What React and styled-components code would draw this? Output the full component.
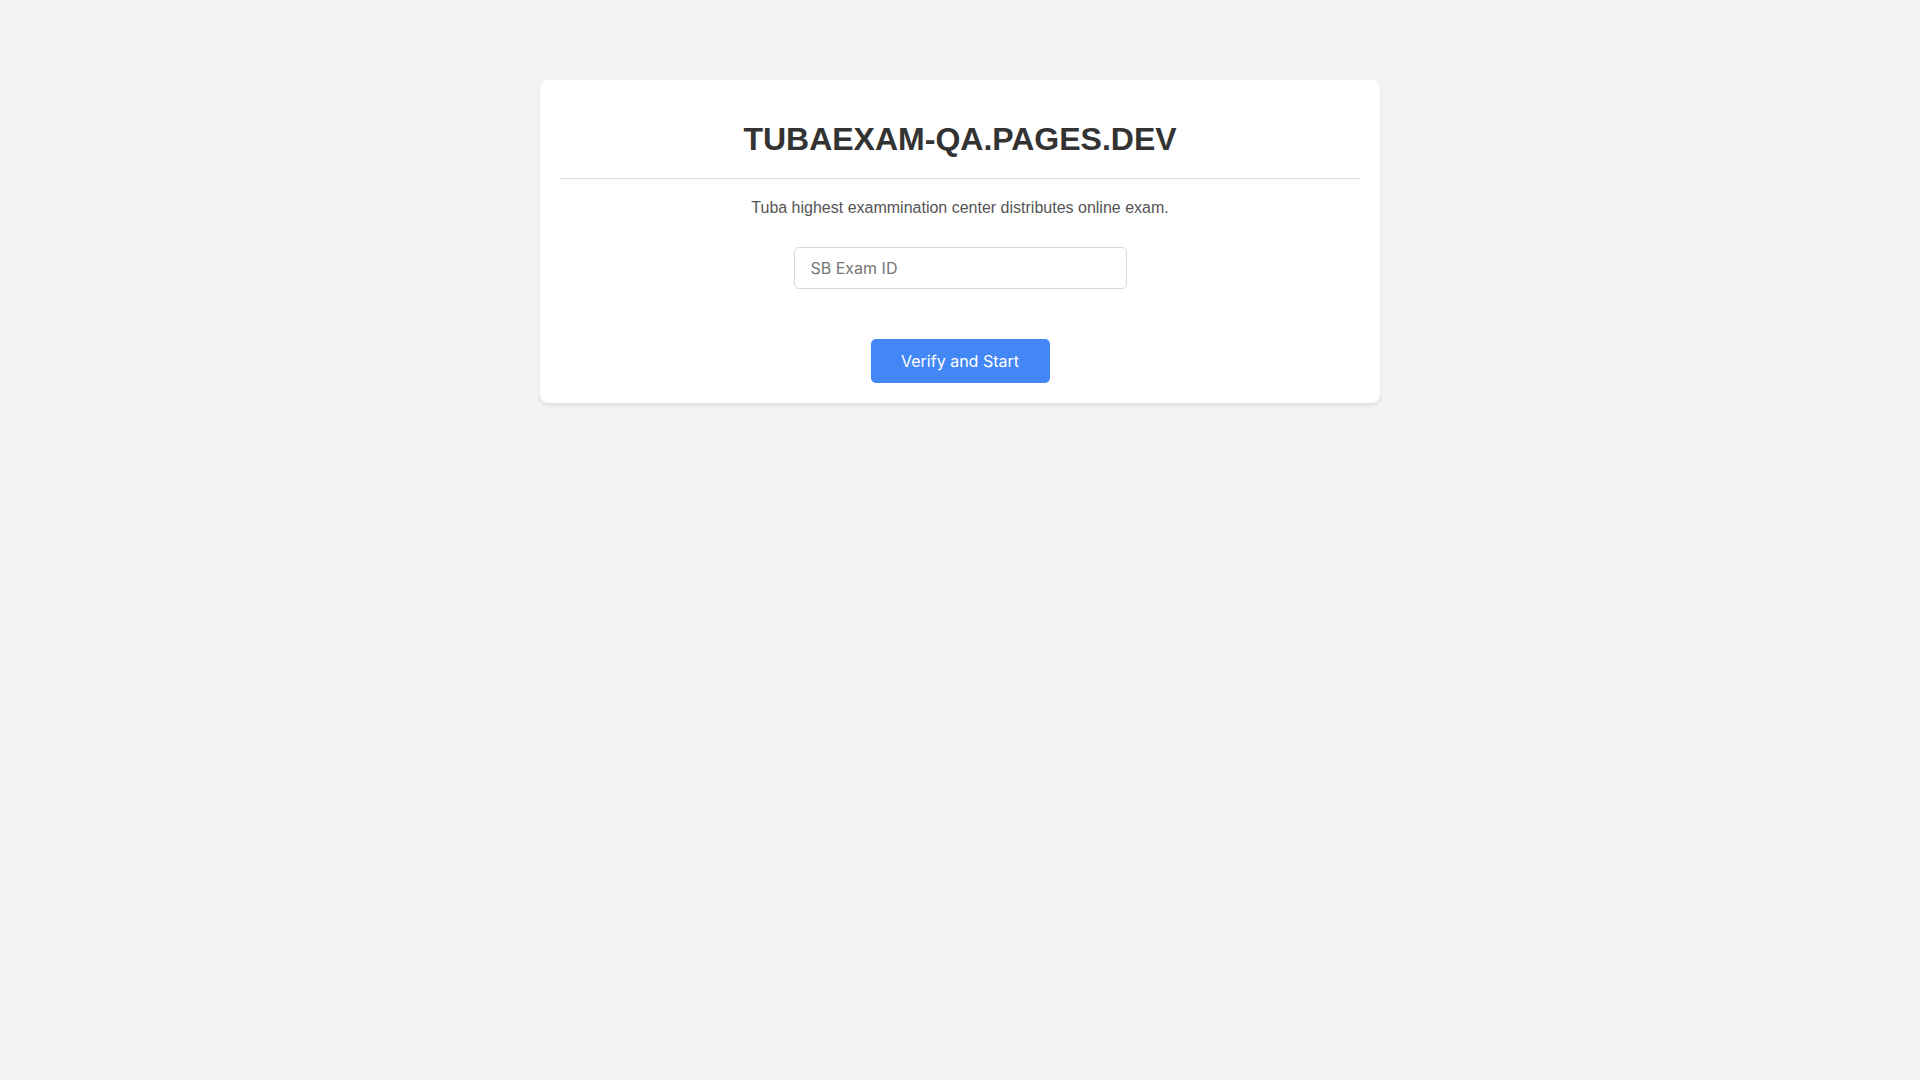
import React from 'react'
import styled, { createGlobalStyle } from 'styled-components'

const GlobalStyle = createGlobalStyle`
  html, body {
    margin: 0;
    padding: 0;
    background: #f4f4f4;
    font-family: 'Liberation Sans', Arial, sans-serif;
  }
  * {
    box-sizing: border-box;
  }
`

const Page = styled.main`
  min-height: 100vh;
  display: flex;
  justify-content: center;
  align-items: flex-start;
  padding-top: 80px;
`

const Card = styled.section`
  width: 840px;
  background: #fff;
  border-radius: 8px;
  box-shadow: 0 2px 4px rgba(0, 0, 0, 0.1);
  padding: 20px;
  display: flex;
  flex-direction: column;
  align-items: center;
`

const Header = styled.header`
  width: 100%;
  border-bottom: 1px solid #ddd;
  padding-bottom: 20px;
  text-align: center;
`

const Title = styled.h1`
  margin: 21px 0 0;
  font-size: 32px;
  font-weight: 700;
  color: #333;
  line-height: 37px;
`

const Subtitle = styled.p`
  margin: 20px 0 0;
  font-size: 16px;
  line-height: 18px;
  color: #555;
`

const Form = styled.form`
  display: flex;
  flex-direction: column;
  align-items: center;
`

const Input = styled.input`
  margin-top: 30px;
  width: 333px;
  height: 42px;
  padding: 0 16px;
  border: 1px solid #d9d9d9;
  border-radius: 5px;
  font-family: Inter, 'Noto Sans', sans-serif;
  font-size: 16px;
  color: #333;
  outline: none;
  &::placeholder {
    color: #767676;
  }
`

const Button = styled.button`
  margin-top: 50px;
  width: 179px;
  height: 44px;
  border: none;
  border-radius: 5px;
  background: #4287f5;
  color: #fff;
  font-family: Inter, 'Noto Sans', sans-serif;
  font-size: 16px;
  font-weight: 400;
  cursor: pointer;
`

const App = () => {
  return (
    <>
      <GlobalStyle />
      <Page>
        <Card>
          <Header>
            <Title>TUBAEXAM-QA.PAGES.DEV</Title>
          </Header>
          <Subtitle>Tuba highest exammination center distributes online exam.</Subtitle>
          <Form onSubmit={(e) => e.preventDefault()}>
            <Input type='text' placeholder='SB Exam ID' />
            <Button type='submit'>Verify and Start</Button>
          </Form>
        </Card>
      </Page>
    </>
  )
}

export default App
